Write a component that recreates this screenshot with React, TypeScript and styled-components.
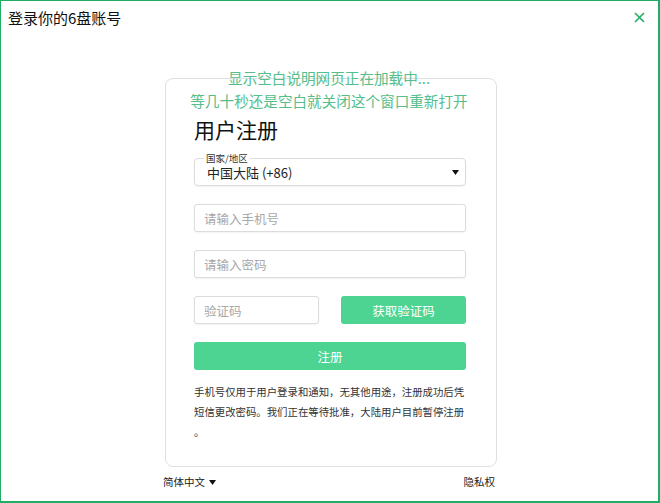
import React from "react";
import styled, { createGlobalStyle } from "styled-components";

const GlobalStyle = createGlobalStyle`
  html, body {
    margin: 0;
    padding: 0;
    background: #fff;
  }
  body {
    font-family: "Noto Sans CJK SC", "Noto Sans", "Liberation Sans", sans-serif;
    color: #222;
  }
  * {
    box-sizing: border-box;
  }
`;

const Window = styled.div`
  width: 660px;
  height: 503px;
  border: 1px solid #1fae66;
  border-right-width: 2px;
  border-bottom-width: 2px;
  display: flex;
  flex-direction: column;
  align-items: center;
  overflow: hidden;
`;

const Header = styled.div`
  align-self: stretch;
  height: 33px;
  display: flex;
  align-items: center;
  justify-content: space-between;
  padding: 0 12px 0 7px;
`;

const Title = styled.div`
  font-size: 15px;
  color: #111;
`;

const CloseButton = styled.button`
  border: 0;
  background: none;
  padding: 0;
  width: 14px;
  height: 14px;
  display: flex;
  align-items: center;
  justify-content: center;
  cursor: pointer;
`;

const Stage = styled.div`
  position: relative;
  margin: 44px 0 0 3px;
  width: 332px;
`;

const Notice = styled.div`
  position: absolute;
  top: -12px;
  left: -54px;
  right: -50px;
  text-align: center;
  font-size: 14.6px;
  line-height: 23px;
  color: #55be8a;
  pointer-events: none;
`;

const Card = styled.div`
  border: 1px solid #e0e0e0;
  border-radius: 8px;
  padding: 35px 30px 24px 28px;
  display: flex;
  flex-direction: column;
  gap: 18px;
`;

const Heading = styled.h1`
  margin: 0 0 -4px 0;
  font-size: 21px;
  font-weight: 400;
  line-height: 30px;
  color: #111;
`;

const SelectBox = styled.div`
  position: relative;
  height: 28px;
  border: 1px solid #dcdcdc;
  border-radius: 4px;
  box-shadow: 0 1px 2px rgba(0, 0, 0, 0.06);
  display: flex;
  align-items: center;
  justify-content: space-between;
  padding: 1px 6px 0 12px;
  font-size: 13px;
  line-height: 17px;
  color: #222;
`;

const Legend = styled.span`
  position: absolute;
  top: -6px;
  left: 9px;
  padding: 0 2px;
  background: #fff;
  font-size: 9.5px;
  line-height: 10px;
  color: #333;
`;

const Field = styled.input<{ $width?: number }>`
  width: ${(p) => (p.$width ? `${p.$width}px` : "100%")};
  height: 28px;
  border: 1px solid #dcdcdc;
  border-radius: 3px;
  box-shadow: 0 1px 2px rgba(0, 0, 0, 0.05);
  padding: 0 9px;
  font-family: inherit;
  font-size: 12.5px;
  color: #222;
  outline: none;
  &::placeholder {
    color: #a8a8a8;
  }
`;

const Row = styled.div`
  display: flex;
  justify-content: space-between;
`;

const GreenButton = styled.button<{ $width?: number }>`
  width: ${(p) => (p.$width ? `${p.$width}px` : "100%")};
  height: 28px;
  border: 0;
  border-radius: 3px;
  background: #4dd492;
  color: #fff;
  font-family: inherit;
  font-size: 12.5px;
  cursor: pointer;
`;

const Note = styled.p`
  margin: -6px 0 0 0;
  width: 272px;
  font-size: 10.4px;
  line-height: 20px;
  color: #333;
  line-break: anywhere;
`;

const Footer = styled.div`
  width: 332px;
  margin: 7px 0 0 -2px;
  display: flex;
  justify-content: space-between;
  align-items: center;
  font-size: 10.5px;
  line-height: 16px;
  color: #222;
`;

const LangPicker = styled.span`
  display: inline-flex;
  align-items: center;
  gap: 4px;
`;

const Caret = () => (
  <svg width="7" height="5" viewBox="0 0 7 5">
    <path d="M0 0 H7 L3.5 5 Z" fill="#111" />
  </svg>
);

export default function App() {
  return (
    <>
      <GlobalStyle />
      <Window>
        <Header>
          <Title>登录你的6盘账号</Title>
          <CloseButton aria-label="关闭">
            <svg width="11" height="11" viewBox="0 0 11 11">
              <path d="M1 1 L10 10 M10 1 L1 10" stroke="#1fae66" strokeWidth="1.6" />
            </svg>
          </CloseButton>
        </Header>
        <Stage>
          <Card>
            <Heading>用户注册</Heading>
            <SelectBox>
              <Legend>国家/地区</Legend>
              <span>中国大陆 (+86)</span>
              <Caret />
            </SelectBox>
            <Field placeholder="请输入手机号" />
            <Field placeholder="请输入密码" type="password" />
            <Row>
              <Field $width={125} placeholder="验证码" />
              <GreenButton $width={125}>获取验证码</GreenButton>
            </Row>
            <GreenButton>注册</GreenButton>
            <Note>
              手机号仅用于用户登录和通知，无其他用途，注册成功后凭短信更改密码。我们正在等待批准，大陆用户目前暂停注册。
            </Note>
          </Card>
          <Notice>
            显示空白说明网页正在加载中...
            <br />
            等几十秒还是空白就关闭这个窗口重新打开
          </Notice>
          <Footer>
            <LangPicker>
              简体中文
              <Caret />
            </LangPicker>
            <span>隐私权</span>
          </Footer>
        </Stage>
      </Window>
    </>
  );
}
